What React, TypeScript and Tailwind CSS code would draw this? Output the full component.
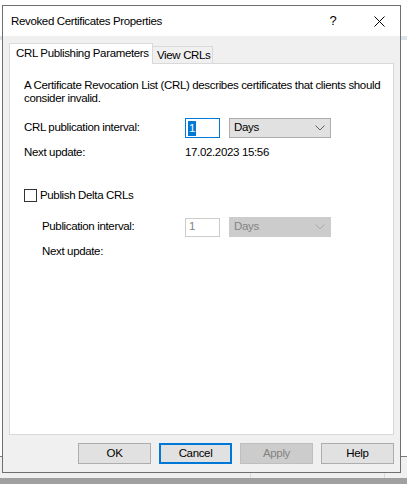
import * as React from "react";

const font = { fontFamily: "'Liberation Sans', Arial, sans-serif" };

function Button({
  label,
  variant = "normal",
}: {
  label: string;
  variant?: "normal" | "focused" | "disabled";
}) {
  const cls =
    variant === "focused"
      ? "border-2 border-[#0078d7] bg-[#e1e1e1] text-black"
      : variant === "disabled"
        ? "border border-[#bfbfbf] bg-[#cccccc] text-[#838383]"
        : "border border-[#adadad] bg-[#e1e1e1] text-black";
  return (
    <div className={`flex h-[21px] w-[73px] items-center justify-center ${cls}`}>
      {label}
    </div>
  );
}

function Chevron({ color }: { color: string }) {
  return (
    <svg width="10" height="6" viewBox="0 0 10 6" className="shrink-0">
      <path d="M0.5 0.5 L5 5 L9.5 0.5" fill="none" stroke={color} strokeWidth="1" />
    </svg>
  );
}

export default function App() {
  return (
    <div className="relative h-[484px] w-[407px] overflow-hidden whitespace-nowrap bg-white" style={font}>
      {/* desktop behind the dialog */}
      <div className="absolute left-0 top-[36px] h-[4px] w-full bg-[#dbe3ec]" />
      <div className="absolute left-0 top-[456px] h-[1px] w-full bg-[#7a7a7a]" />
      <div className="absolute left-0 top-[457px] h-[21px] w-full bg-[#f0f0f0]" />
      <div className="absolute left-[250px] top-[457px] h-[21px] w-[1px] bg-[#dadada]" />
      <div className="absolute left-[384px] top-[457px] h-[21px] w-[1px] bg-[#dadada]" />
      <div className="absolute left-0 top-[478px] h-[6px] w-full bg-[#a0a0a0]" />

      {/* dialog window */}
      <div className="absolute left-[2px] top-[5px] flex h-[468px] w-[399px] flex-col border border-[#6f6f6f] bg-[#f0f0f0] text-[11.5px] tracking-[-0.35px] text-black">
        {/* title bar */}
        <div className="flex h-[30px] shrink-0 items-center bg-white pl-[8px]">
          <span className="flex-1 pt-[1px]">Revoked Certificates Properties</span>
          <span className="w-[16px] text-center text-[13px]">?</span>
          <span className="ml-[30px] mr-[13px] flex w-[16px] items-center justify-center">
            <svg width="11" height="11" viewBox="0 0 11 11">
              <path d="M0.5 0.5 L10.5 10.5 M10.5 0.5 L0.5 10.5" stroke="#000" strokeWidth="1" />
            </svg>
          </span>
        </div>

        {/* tabs */}
        <div className="mt-[7px] flex h-[21px] shrink-0 items-end pl-[6px]">
          <div className="relative z-10 flex h-[21px] w-[144px] items-center border border-b-0 border-[#d9d9d9] bg-white pb-[1px] pl-[6px]">
            CRL Publishing Parameters
          </div>
          <div className="flex h-[18px] w-[60px] items-center border border-b-0 border-l-0 border-[#d9d9d9] bg-[#f0f0f0] pl-[4px] pt-[1px]">
            View CRLs
          </div>
        </div>

        {/* tab panel */}
        <div className="mx-[6px] -mt-[1px] flex h-[372px] flex-col border border-[#d9d9d9] bg-white pl-[14px] pt-[15px]">
          <p className="leading-[13px]">
            A Certificate Revocation List (CRL) describes certificates that clients should
            <br />
            consider invalid.
          </p>

          <div className="mt-[13px] flex h-[20px] items-center">
            <span className="w-[161px]">CRL publication interval:</span>
            <div className="flex h-[20px] w-[35px] items-center border border-[#0078d7] bg-white pl-[2px]">
              <span className="bg-[#0078d7] px-[1px] leading-[15px] text-white">1</span>
            </div>
            <div className="ml-[9px] flex h-[20px] w-[102px] items-center justify-between border border-[#adadad] bg-[#e1e1e1] pl-[4px] pr-[5px]">
              <span>Days</span>
              <Chevron color="#606060" />
            </div>
          </div>

          <div className="mt-[5px] flex h-[20px] items-center">
            <span className="w-[161px]">Next update:</span>
            <span>17.02.2023 15:56</span>
          </div>

          <div className="mt-[26px] flex h-[13px] items-center">
            <div className="h-[13px] w-[13px] border border-[#333333] bg-white" />
            <span className="ml-[3px]">Publish Delta CRLs</span>
          </div>

          <div className="mt-[15px] flex h-[20px] items-center pl-[18px]">
            <span className="w-[143px]">Publication interval:</span>
            <div className="flex h-[19px] w-[35px] items-center border border-[#cccccc] bg-white pl-[3px] text-[#838383]">
              1
            </div>
            <div className="ml-[9px] flex h-[20px] w-[102px] items-center justify-between border border-[#cccccc] bg-[#cccccc] pl-[4px] pr-[5px] text-[#838383]">
              <span>Days</span>
              <Chevron color="#a8a8a8" />
            </div>
          </div>

          <div className="mt-[5px] flex h-[20px] items-center pl-[18px]">
            <span>Next update:</span>
          </div>
        </div>

        {/* buttons */}
        <div className="mt-[8px] flex justify-end gap-[8px] pr-[6px]">
          <Button label="OK" />
          <Button label="Cancel" variant="focused" />
          <Button label="Apply" variant="disabled" />
          <Button label="Help" />
        </div>
      </div>
    </div>
  );
}
